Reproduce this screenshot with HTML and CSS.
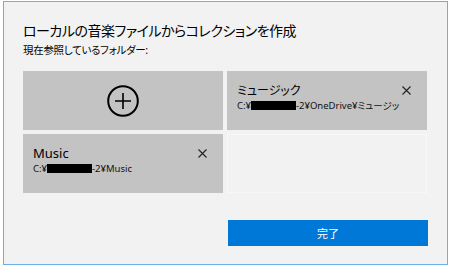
FILE: index.html
```html
<!DOCTYPE html>
<html lang="ja">
<head>
  <meta charset="UTF-8" />
  <meta name="viewport" content="width=device-width, initial-scale=1.0" />
  <title>コレクションを作成</title>
  <link rel="stylesheet" href="styles.css">
</head>
<body>
  <div class="dialog">
    <h1 class="title">ローカルの音楽ファイルからコレクションを作成</h1>
    <p class="subtitle">現在参照しているフォルダー:</p>

    <div class="folders">
      <div class="tile add-tile">
        <svg width="32" height="32" viewBox="0 0 32 32">
          <circle cx="16" cy="16" r="14.8" fill="none" stroke="#000" stroke-width="2" />
          <path d="M8 16h16M16 8v16" stroke="#000" stroke-width="1.6" />
        </svg>
      </div>
      <div class="tile folder">
        <div class="folder-info">
          <div class="folder-name">ミュージック</div>
          <div class="folder-path">C:¥<span class="redact"></span>-2¥OneDrive¥ミュージッ</div>
        </div>
        <span class="remove">
          <svg width="9" height="9" viewBox="0 0 9 9"><path d="M0.5 0.5l8 8M8.5 0.5l-8 8" stroke="#222" stroke-width="1.1" /></svg>
        </span>
      </div>
      <div class="tile folder">
        <div class="folder-info">
          <div class="folder-name latin">Music</div>
          <div class="folder-path">C:¥<span class="redact"></span>-2¥Music</div>
        </div>
        <span class="remove">
          <svg width="9" height="9" viewBox="0 0 9 9"><path d="M0.5 0.5l8 8M8.5 0.5l-8 8" stroke="#222" stroke-width="1.1" /></svg>
        </span>
      </div>
      <div class="tile empty"></div>
    </div>

    <div class="actions">
      <button class="done">完了</button>
    </div>
  </div>
</body>
</html>
```

FILE: styles.css
```css
body {
  margin: 0;
  background-color: #ffffff;
  font-family: 'Noto Sans', 'Noto Sans CJK JP', sans-serif;
  font-feature-settings: "palt";
  color: #000000;
}
.dialog {
  box-sizing: border-box;
  width: 445px;
  height: 264px;
  margin: 1px 0 0 3px;
  border: 1px solid #6aaeea;
  background-color: #f2f2f2;
  padding: 19px 19px 0 19px;
}
.title {
  margin: 0;
  font-size: 14px;
  letter-spacing: -0.5px;
  font-weight: normal;
  line-height: 20px;
}
.subtitle {
  margin: 2px 0 0;
  font-size: 10.5px;
  letter-spacing: -0.3px;
  line-height: 14px;
}
.folders {
  display: grid;
  grid-template-columns: 200px 200px;
  grid-auto-rows: 59px;
  gap: 4px;
  margin-top: 14px;
}
.tile {
  background-color: #c3c3c3;
}
.add-tile {
  display: flex;
  align-items: center;
  justify-content: center;
}
.folder {
  display: flex;
  align-items: flex-start;
  padding: 11px 0 0 10px;
  box-sizing: border-box;
}
.folder-info {
  flex: 1;
  min-width: 0;
  white-space: nowrap;
  margin-right: 6px;
}
.folder-name {
  font-size: 12px;
  line-height: 17px;
}
.folder-name.latin {
  font-size: 13px;
}
.folder-path {
  font-size: 9.5px;
  line-height: 13px;
  color: #111111;
}
.redact {
  display: inline-block;
  width: 45px;
  height: 9px;
  background-color: #000000;
  vertical-align: -1px;
}
.remove {
  width: 9px;
  margin: 4px 16px 0 0;
  line-height: 0;
}
.empty {
  background-color: transparent;
  border: 1px solid #f7f7f7;
}
.actions {
  display: flex;
  justify-content: flex-end;
  margin-top: 27px;
}
.done {
  width: 200px;
  height: 26px;
  border: none;
  background-color: #0078d7;
  color: #ffffff;
  font-family: 'Noto Sans CJK JP', sans-serif;
  font-size: 11px;
  cursor: pointer;
}
```
